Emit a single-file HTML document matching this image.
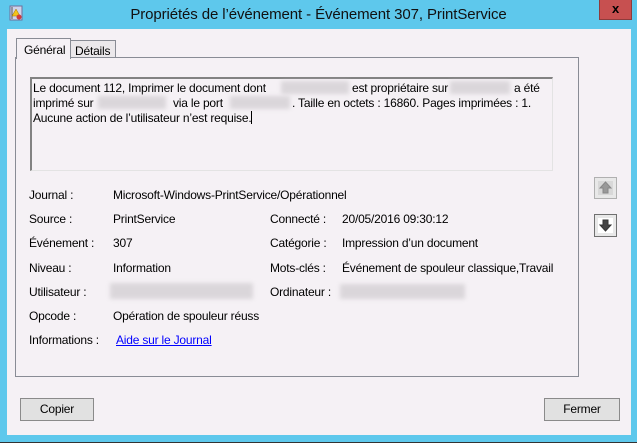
<!DOCTYPE html>
<html><head><meta charset="utf-8"><style>
*{margin:0;padding:0;box-sizing:border-box}
body{width:637px;height:443px;overflow:hidden;background:#5ec8ec;font-family:"Liberation Sans",sans-serif;font-size:12px;letter-spacing:-0.2px;color:#000;position:relative}
.a{position:absolute}
.title{left:0;top:6px;width:637px;text-align:center;font-size:15px;letter-spacing:-0.1px;color:#111}
.client{left:7px;top:29px;width:624px;height:406px;background:#f5f1f5}
.blur{position:absolute;background:#d4d0d4;filter:blur(2px);opacity:.8}
.btn{position:absolute;border:1px solid #8a8a8a;background:#e1e1e1;text-align:center;line-height:21px;font-size:12px}
.lbl{position:absolute;white-space:nowrap}
</style></head><body>
<div class="a" style="left:0;top:442px;width:637px;height:1px;background:#333"></div>
<div class="a title">Propriétés de l’événement - Événement 307, PrintService</div>
<svg class="a" style="left:8px;top:5px" width="16" height="16"><rect x="2" y="1" width="12" height="14" fill="#cfd2ea" stroke="#6f6f9a"/><line x1="4" y1="2" x2="4" y2="14" stroke="#555"/><path d="M7 4 L11 11 L3 11Z" fill="#f2c31a" stroke="#a07000" stroke-width=".5" transform="translate(1,0)"/><circle cx="11" cy="12" r="2.5" fill="#d03a3a"/></svg>
<div class="a" style="left:599px;top:0;width:33px;height:20px;background:#c75050;border:1px solid #8e3b3b;border-top:none;color:#000;font-weight:bold;text-align:center;font-size:13px;line-height:18px">x</div>
<div class="a client"></div>
<div class="a" style="left:15px;top:57px;width:564px;height:320px;border:1px solid #898c95;background:#fff"></div>
<div class="a" style="left:16px;top:58px;width:562px;height:318px;background:#f5f1f5"></div>
<div class="a" style="left:16px;top:38px;width:55px;height:21px;background:#f5f1f5;border:1px solid #898c95;border-bottom:none;padding:4px 0 0 7px">Général</div>
<div class="a" style="left:71px;top:40px;width:45px;height:18px;background:#ebe8eb;border:1px solid #898c95;border-left:none;padding:3px 0 0 4px">Détails</div>
<div class="a" style="left:30px;top:77px;width:523px;height:94px;border:1px solid #828282;border-right-color:#e3e3e3;border-bottom-color:#e3e3e3;border-top-width:2px;border-left-width:2px;background:#f5f1f5"></div>
<div class="lbl" style="left:33px;top:81px">Le document 112, Imprimer le document dont</div>
<div class="blur" style="left:281px;top:81px;width:68px;height:13px"></div>
<div class="lbl" style="left:352px;top:81px">est propriétaire sur</div>
<div class="blur" style="left:450px;top:81px;width:60px;height:13px"></div>
<div class="lbl" style="left:514px;top:81px">a été</div>
<div class="lbl" style="left:33px;top:96px">imprimé sur</div>
<div class="blur" style="left:98px;top:96px;width:68px;height:13px"></div>
<div class="lbl" style="left:173px;top:96px">via le port</div>
<div class="blur" style="left:230px;top:96px;width:60px;height:13px"></div>
<div class="lbl" style="left:292px;top:96px">. Taille en octets : 16860. Pages imprimées : 1.</div>
<div class="lbl" style="left:33px;top:111px">Aucune action de l’utilisateur n’est requise.<span style="display:inline-block;width:1px;height:13px;background:#000;vertical-align:-2px"></span></div>
<div class="lbl" style="left:29px;top:188px">Journal :</div><div class="lbl" style="left:113px;top:188px">Microsoft-Windows-PrintService/Opérationnel</div>
<div class="lbl" style="left:29px;top:212px">Source :</div><div class="lbl" style="left:113px;top:212px">PrintService</div>
<div class="lbl" style="left:270px;top:212px">Connecté :</div><div class="lbl" style="left:342px;top:212px">20/05/2016 09:30:12</div>
<div class="lbl" style="left:29px;top:236px">Événement :</div><div class="lbl" style="left:113px;top:236px">307</div>
<div class="lbl" style="left:270px;top:236px">Catégorie :</div><div class="lbl" style="left:342px;top:236px">Impression d’un document</div>
<div class="lbl" style="left:29px;top:261px">Niveau :</div><div class="lbl" style="left:113px;top:261px">Information</div>
<div class="lbl" style="left:270px;top:261px">Mots-clés :</div><div class="lbl" style="left:342px;top:261px">Événement de spouleur classique,Travail</div>
<div class="lbl" style="left:29px;top:285px">Utilisateur :</div><div class="blur" style="left:110px;top:283px;width:143px;height:16px"></div>
<div class="lbl" style="left:270px;top:285px">Ordinateur :</div><div class="blur" style="left:340px;top:284px;width:125px;height:15px"></div>
<div class="lbl" style="left:29px;top:309px">Opcode :</div><div class="lbl" style="left:113px;top:309px">Opération de spouleur réuss</div>
<div class="lbl" style="left:29px;top:333px">Informations :</div><div class="lbl" style="left:116px;top:333px;color:#0000ff;text-decoration:underline">Aide sur le Journal</div>
<div class="a" style="left:594px;top:177px;width:23px;height:22px;border:1px solid #b0b0b0;background:#e8e8e8"><svg width="21" height="20"><rect x="3" y="3" width="15" height="14" fill="#d8d8d8"/><path d="M10.5 4 L16 10 L13 10 L13 15 L8 15 L8 10 L5 10Z" fill="#999" stroke="#888"/></svg></div>
<div class="a" style="left:594px;top:214px;width:23px;height:23px;border:1px solid #707070;background:#e8e8e8"><svg width="21" height="21"><rect x="3" y="3" width="15" height="15" fill="#fff"/><path d="M8 5 L13 5 L13 10 L16 10 L10.5 16 L5 10 L8 10Z" fill="#444" stroke="#333"/></svg></div>
<div class="btn" style="left:20px;top:398px;width:74px;height:23px">Copier</div>
<div class="btn" style="left:544px;top:398px;width:76px;height:23px">Fermer</div>
</body></html>
